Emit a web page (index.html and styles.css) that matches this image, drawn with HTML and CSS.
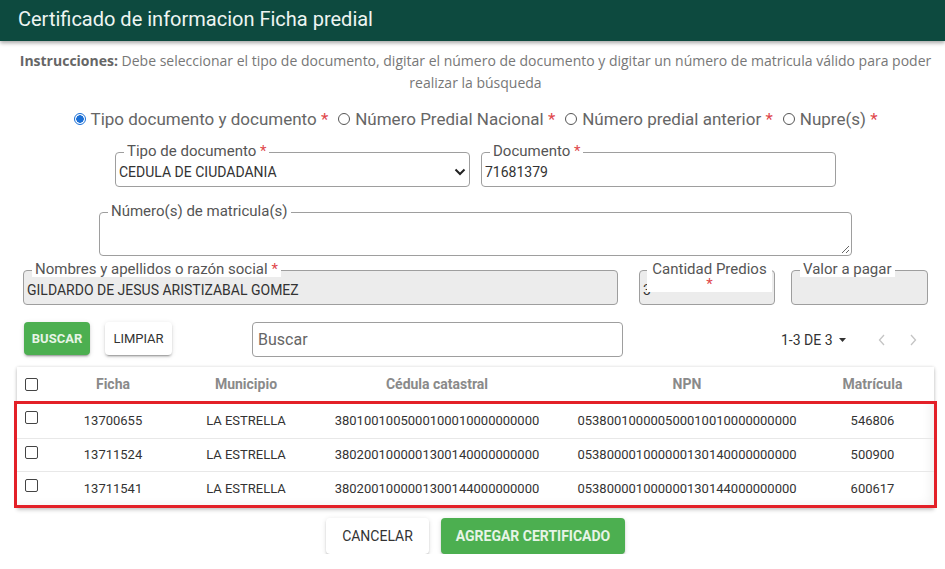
FILE: index.html
```html
<!doctype html>
<html>

<head>
    <meta charset="utf-8">
    <title>Certificado de informacion Ficha predial</title>
    <link rel="stylesheet" href="styles.css">
</head>

<body>
    <header class="topbar">Certificado de informacion Ficha predial</header>

    <main class="content">
        <!-- instrucciones -->
        <p class="instrucciones"><b>Instrucciones:</b> Debe seleccionar el tipo de documento, digitar el número de documento y digitar un número de matricula válido para poder realizar la búsqueda</p>

        <!-- tipo de busqueda -->
        <div class="filtros">
            <label><input type="radio" name="filtro" checked><span>Tipo documento y documento <span class="req">*</span></span></label>
            <label><input type="radio" name="filtro"><span>Número Predial Nacional <span class="req">*</span></span></label>
            <label><input type="radio" name="filtro"><span>Número predial anterior <span class="req">*</span></span></label>
            <label><input type="radio" name="filtro"><span>Nupre(s) <span class="req">*</span></span></label>
        </div>

        <div class="fila fila-doc">
            <div class="campo campo-tipo">
                <label>Tipo de documento <span class="req">*</span></label>
                <select>
                    <option>CEDULA DE CIUDADANIA</option>
                </select>
                <svg class="flecha" width="12" height="8" viewBox="0 0 12 8"><path d="M1.5 1.5 L6 6 L10.5 1.5" fill="none" stroke="#222" stroke-width="2"/></svg>
            </div>
            <div class="campo campo-doc">
                <label>Documento <span class="req">*</span></label>
                <input type="text" value="71681379">
            </div>
        </div>

        <div class="fila fila-matricula">
            <div class="campo campo-area">
                <label>Número(s) de matricula(s)</label>
                <textarea></textarea>
            </div>
        </div>

        <div class="fila fila-datos">
            <div class="campo lectura campo-nombre">
                <label>Nombres y apellidos o razón social <span class="req">*</span></label>
                <input type="text" value="GILDARDO DE JESUS ARISTIZABAL GOMEZ" disabled>
            </div>
            <div class="campo lectura campo-cantidad">
                <label>Cantidad Predios <span class="req">*</span></label>
                <input type="text" value="3" disabled>
            </div>
            <div class="campo lectura campo-valor">
                <label>Valor a pagar</label>
                <input type="text" value="" disabled>
            </div>
        </div>

        <!-- acciones de busqueda -->
        <div class="acciones">
            <button class="btn btn-verde btn-buscar">Buscar</button>
            <button class="btn btn-blanco btn-limpiar">Limpiar</button>
            <input class="buscar" type="text" placeholder="Buscar">
            <div class="paginacion">
                <span>1-3 DE 3</span>
                <svg width="7" height="4" viewBox="0 0 7 4"><path d="M0 0 H7 L3.5 4 Z" fill="#333"/></svg>
                <svg class="pag-ant" width="7" height="12" viewBox="0 0 7 12"><path d="M6 1 L1.5 6 L6 11" fill="none" stroke="#c4c4c4" stroke-width="1.3"/></svg>
                <svg class="pag-sig" width="7" height="12" viewBox="0 0 7 12"><path d="M1 1 L5.5 6 L1 11" fill="none" stroke="#c4c4c4" stroke-width="1.3"/></svg>
            </div>
        </div>

        <!-- tabla de predios -->
        <div class="tabla">
            <div class="thead">
                <div class="tr">
                    <span><input type="checkbox"></span>
                    <span>Ficha</span>
                    <span>Municipio</span>
                    <span>Cédula catastral</span>
                    <span>NPN</span>
                    <span class="ult">Matrícula</span>
                </div>
            </div>
            <div class="tbody">
                <div class="tr">
                    <span class="chk"><input type="checkbox"></span>
                    <span>13700655</span>
                    <span>LA ESTRELLA</span>
                    <span>3801001005000100010000000000</span>
                    <span>053800100000500010010000000000</span>
                    <span class="ult">546806</span>
                </div>
                <div class="tr">
                    <span class="chk"><input type="checkbox"></span>
                    <span>13711524</span>
                    <span>LA ESTRELLA</span>
                    <span>3802001000001300140000000000</span>
                    <span>053800001000000130140000000000</span>
                    <span class="ult">500900</span>
                </div>
                <div class="tr">
                    <span class="chk"><input type="checkbox"></span>
                    <span>13711541</span>
                    <span>LA ESTRELLA</span>
                    <span>3802001000001300144000000000</span>
                    <span>053800001000000130144000000000</span>
                    <span class="ult">600617</span>
                </div>
            </div>
        </div>

        <div class="pie">
            <button class="btn btn-blanco btn-cancelar">Cancelar</button>
            <button class="btn btn-verde btn-agregar">Agregar certificado</button>
        </div>
    </main>
</body>

</html>
```

FILE: styles.css
```css
* {
    box-sizing: border-box;
}

body {
    margin: 0;
    font-family: Roboto, "Liberation Sans", sans-serif;
    color: #333;
    background-color: #fff;
}

/* barra superior */
.topbar {
    height: 41px;
    padding: 0 18px;
    background-color: #0d4a3f;
    color: #eef5f2;
    font-size: 20px;
    line-height: 38px;
    box-shadow: 0 2px 4px rgba(0, 0, 0, 0.35);
}

.content {
    padding: 0 4px 0 10px;
}

.instrucciones {
    margin: 9px 0 0;
    font-family: "Open Sans", sans-serif;
    font-size: 14px;
    line-height: 22px;
    color: #777;
    text-align: center;
}

.instrucciones b {
    color: #666;
}

.req {
    color: #e0474c;
}

/* radios */
.filtros {
    display: flex;
    justify-content: center;
    align-items: center;
    gap: 10px;
    height: 24px;
    margin-top: 13px;
    font-size: 17px;
    color: #666;
}

.filtros label {
    display: inline-flex;
    align-items: center;
    gap: 5px;
}

.filtros input {
    appearance: none;
    width: 12px;
    height: 12px;
    margin: 0;
    border: 1px solid #555;
    border-radius: 50%;
}

.filtros input:checked {
    border-color: #1a6fd6;
    background: radial-gradient(circle, #1a6fd6 0 3.5px, #fff 4px);
}

/* campos */
.fila {
    display: flex;
    justify-content: center;
}

.fila-doc {
    gap: 11px;
    margin-top: 21px;
}

.fila-matricula {
    margin-top: 25px;
}

.fila-datos {
    margin-top: 14px;
}

.campo {
    position: relative;
    display: flex;
    align-items: flex-end;
    height: 35px;
    padding: 0 3px 5px;
    border: 1px solid #9e9e9e;
    border-radius: 4px;
}

.campo label {
    position: absolute;
    top: -10px;
    left: 8px;
    padding: 0 3px;
    background-color: #fff;
    font-size: 15px;
    line-height: 16px;
    color: #555;
    white-space: nowrap;
}

.campo input,
.campo select,
.campo textarea {
    width: 100%;
    height: 18px;
    padding: 0;
    border: 0;
    outline: 0;
    background: transparent;
    font: 14px/18px Roboto, "Liberation Sans", sans-serif;
    color: #333;
}

.campo select {
    appearance: none;
    flex: 1;
}

.flecha {
    margin-bottom: 5px;
    flex: none;
}

.campo-tipo,
.campo-doc {
    width: 355px;
}

.campo-area {
    width: 753px;
    height: 44px;
    padding: 0 1px 1px 3px;
}

.campo-area textarea {
    height: 30px;
}

.lectura {
    background-color: #ececec;
}

.campo-nombre {
    width: 595px;
}

.campo-cantidad {
    width: 136px;
    margin-left: 21px;
}

.campo-cantidad label {
    top: -9px;
    left: 7px;
    width: 125px;
    line-height: 15px;
    text-align: center;
    white-space: normal;
}

.campo-valor {
    width: 137px;
    margin-left: 16px;
}

/* botones */
.btn {
    height: 33px;
    padding: 0;
    border: 0;
    border-radius: 4px;
    font-family: Roboto, "Liberation Sans", sans-serif;
    font-size: 13px;
    text-transform: uppercase;
    box-shadow: 0 3px 1px -2px rgba(0, 0, 0, 0.2), 0 2px 2px 0 rgba(0, 0, 0, 0.14), 0 1px 5px 0 rgba(0, 0, 0, 0.12);
}

.btn-verde {
    background-color: #4caf50;
    color: #e6f4e6;
    font-weight: 700;
}

.btn-blanco {
    background-color: #fff;
    color: #333;
    font-weight: 400;
}

.acciones {
    display: flex;
    align-items: flex-start;
    margin-top: 17px;
    padding-left: 14px;
}

.btn-buscar {
    width: 66px;
}

.btn-limpiar {
    width: 67px;
    margin-left: 15px;
}

.buscar {
    width: 371px;
    height: 35px;
    margin-left: 80px;
    padding: 0 5px;
    border: 1px solid #9e9e9e;
    border-radius: 4px;
    font-family: Roboto, "Liberation Sans", sans-serif;
    font-size: 16px;
}

.buscar::placeholder {
    color: #666;
}

.paginacion {
    display: flex;
    align-items: center;
    height: 35px;
    margin-left: 158px;
    font-size: 14px;
    color: #333;
}

.paginacion span {
    margin-right: 6px;
}

.pag-ant {
    margin-left: 32px;
}

.pag-sig {
    margin-left: 25px;
}

/* tabla */
.tabla {
    margin: 10px 7px 0;
    background-color: #fff;
    box-shadow: 0 2px 4px rgba(0, 0, 0, 0.2), 0 0 3px rgba(0, 0, 0, 0.12);
}

.tr {
    display: grid;
    grid-template-columns: 44px 104px 162px 220px 280px 1fr;
    align-items: center;
    height: 34px;
    text-align: center;
}

.tr .ult {
    padding-right: 16px;
}

.tr input {
    appearance: none;
    display: block;
    width: 13px;
    height: 13px;
    margin: 0 0 0 8px;
    border: 1px solid #444;
    border-radius: 2px;
}

.thead .tr {
    font-size: 14px;
    font-weight: 700;
    color: #8a8a8a;
}

.tbody {
    margin: 0 -3px;
    border: 3px solid #e32028;
    box-shadow: inset -10px -6px 12px -8px rgba(0, 0, 0, 0.08);
}

.tbody .tr {
    height: 33.5px;
    font-size: 13px;
    color: #333;
}

.tbody .tr + .tr {
    border-top: 1px solid #e8e8e8;
}

.tbody .chk {
    align-self: start;
    margin-top: 7px;
}

.pie {
    display: flex;
    justify-content: center;
    gap: 12px;
    margin-top: 10px;
}

.btn-cancelar,
.btn-agregar {
    height: 36px;
    font-size: 14px;
}

.btn-cancelar {
    width: 103px;
}

.btn-agregar {
    width: 184px;
}
```
